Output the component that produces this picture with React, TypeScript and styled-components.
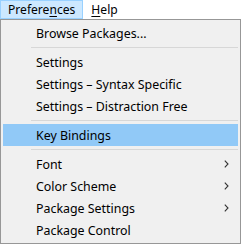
import React from "react";
import styled, { createGlobalStyle } from "styled-components";

const GlobalStyle = createGlobalStyle`
  html, body {
    margin: 0;
    padding: 0;
    background: #ffffff;
  }
  body {
    font-family: "Noto Sans", "Open Sans", "Liberation Sans", sans-serif;
    font-size: 12.4px;
    color: #000000;
  }
`;

const Page = styled.div`
  width: 241px;
  height: 244px;
  display: flex;
  flex-direction: column;
`;

const MenuBar = styled.div`
  display: flex;
  height: 19px;
  background: #ffffff;
  font-size: 12.1px;
`;

const MenuTitle = styled.div<{ $active?: boolean }>`
  box-sizing: border-box;
  height: 19px;
  padding: 0 7px;
  display: flex;
  align-items: center;
  line-height: 17px;
  border: 1px solid ${(p) => (p.$active ? "#99d1ff" : "transparent")};
  background: ${(p) => (p.$active ? "#cce8ff" : "transparent")};
`;

const Key = styled.span`
  text-decoration: underline;
  text-underline-offset: 2px;
`;

const Menu = styled.div`
  box-sizing: border-box;
  width: 241px;
  height: 225px;
  border: 1px solid #979797;
  background: #f0f0f0;
  padding: 2px;
  display: flex;
  flex-direction: column;
`;

const Item = styled.div<{ $highlight?: boolean }>`
  height: 22px;
  flex: 0 0 22px;
  display: flex;
  align-items: center;
  justify-content: space-between;
  padding: 0 9px 0 33px;
  background: ${(p) => (p.$highlight ? "#91c9f7" : "transparent")};
  white-space: nowrap;
`;

const Separator = styled.div`
  flex: 0 0 7px;
  display: flex;
  align-items: center;
  padding-left: 28px;
  &::after {
    content: "";
    flex: 1;
    height: 1px;
    background: #d7d7d7;
  }
`;

const Chevron = () => (
  <svg width="5" height="8" viewBox="0 0 5 8" aria-hidden="true">
    <polyline points="0.8,0.6 4,4 0.8,7.4" fill="none" stroke="#333" strokeWidth="1.1" />
  </svg>
);

type Entry = { label?: string; sub?: boolean; hl?: boolean; sep?: boolean };

const entries: Entry[] = [
  { label: "Browse Packages..." },
  { sep: true },
  { label: "Settings" },
  { label: "Settings – Syntax Specific" },
  { label: "Settings – Distraction Free" },
  { sep: true },
  { label: "Key Bindings", hl: true },
  { sep: true },
  { label: "Font", sub: true },
  { label: "Color Scheme", sub: true },
  { label: "Package Settings", sub: true },
  { label: "Package Control" },
];

export default function App() {
  return (
    <>
      <GlobalStyle />
      <Page>
        <MenuBar>
          <MenuTitle $active>
            <span>
              Prefere<Key>n</Key>ces
            </span>
          </MenuTitle>
          <MenuTitle>
            <span>
              <Key>H</Key>elp
            </span>
          </MenuTitle>
        </MenuBar>
        <Menu>
          {entries.map((e, i) =>
            e.sep ? (
              <Separator key={i} />
            ) : (
              <Item key={i} $highlight={e.hl}>
                <span>{e.label}</span>
                {e.sub && <Chevron />}
              </Item>
            )
          )}
        </Menu>
      </Page>
    </>
  );
}
